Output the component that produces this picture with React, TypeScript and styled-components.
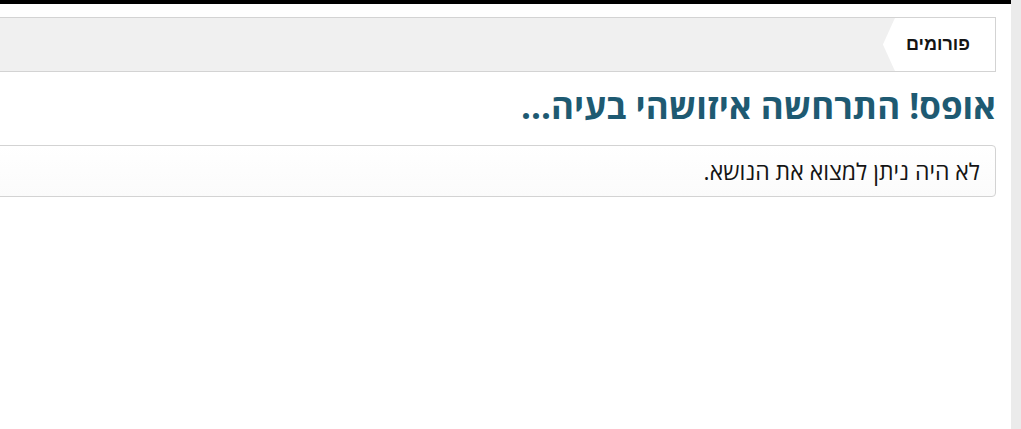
import React from "react";
import styled, { createGlobalStyle } from "styled-components";

const Global = createGlobalStyle`
  html, body { margin: 0; padding: 0; background: #fff; }
  body { font-family: "Open Sans", "Liberation Sans", sans-serif; }
`;

const Page = styled.div`
  display: flex;
  width: 1021px;
  height: 429px;
  overflow: hidden;
`;

const Main = styled.div`
  flex: 1;
  display: flex;
  flex-direction: column;
  border-top: 4px solid #000;
  direction: rtl;
  padding: 13px 15px 0 0;
`;

const Rail = styled.div`
  width: 10px;
  background: #ebebeb;
`;

const Breadcrumbs = styled.nav`
  display: flex;
  height: 53px;
  margin-left: -20px;
  background: #f0f0f0;
  border: 1px solid #d3d3d3;
`;

const Crumb = styled.a`
  position: relative;
  display: flex;
  align-items: center;
  padding: 0 25px 0 11px;
  background: #fff;
  color: #141414;
  font-family: "Liberation Sans", Arial, sans-serif;
  font-weight: 700;
  font-size: 18px;
  text-decoration: none;
  &::after {
    content: "";
    position: absolute;
    left: -12px;
    top: 0;
    width: 12px;
    height: 100%;
    background: #fff;
    clip-path: polygon(100% 0, 0 50%, 100% 100%);
  }
`;

const Title = styled.h1`
  margin: 12px 0 0;
  font-size: 35px;
  font-weight: 700;
  line-height: 44px;
  color: #1e5a72;
`;

const Notice = styled.div`
  margin: 17px 0 0 -20px;
  height: 50px;
  display: flex;
  align-items: center;
  padding: 0 15px;
  border: 1px solid #d3d3d3;
  border-radius: 0 4px 4px 0;
  background: linear-gradient(#fff, #fbfbfb);
  font-size: 23px;
  color: #141414;
`;

export default function App() {
  return (
    <>
      <Global />
      <Page>
        <Main>
          <Breadcrumbs>
            <Crumb href="#">פורומים</Crumb>
          </Breadcrumbs>
          <Title>אופס! התרחשה איזושהי בעיה...</Title>
          <Notice>לא היה ניתן למצוא את הנושא.</Notice>
        </Main>
        <Rail />
      </Page>
    </>
  );
}
